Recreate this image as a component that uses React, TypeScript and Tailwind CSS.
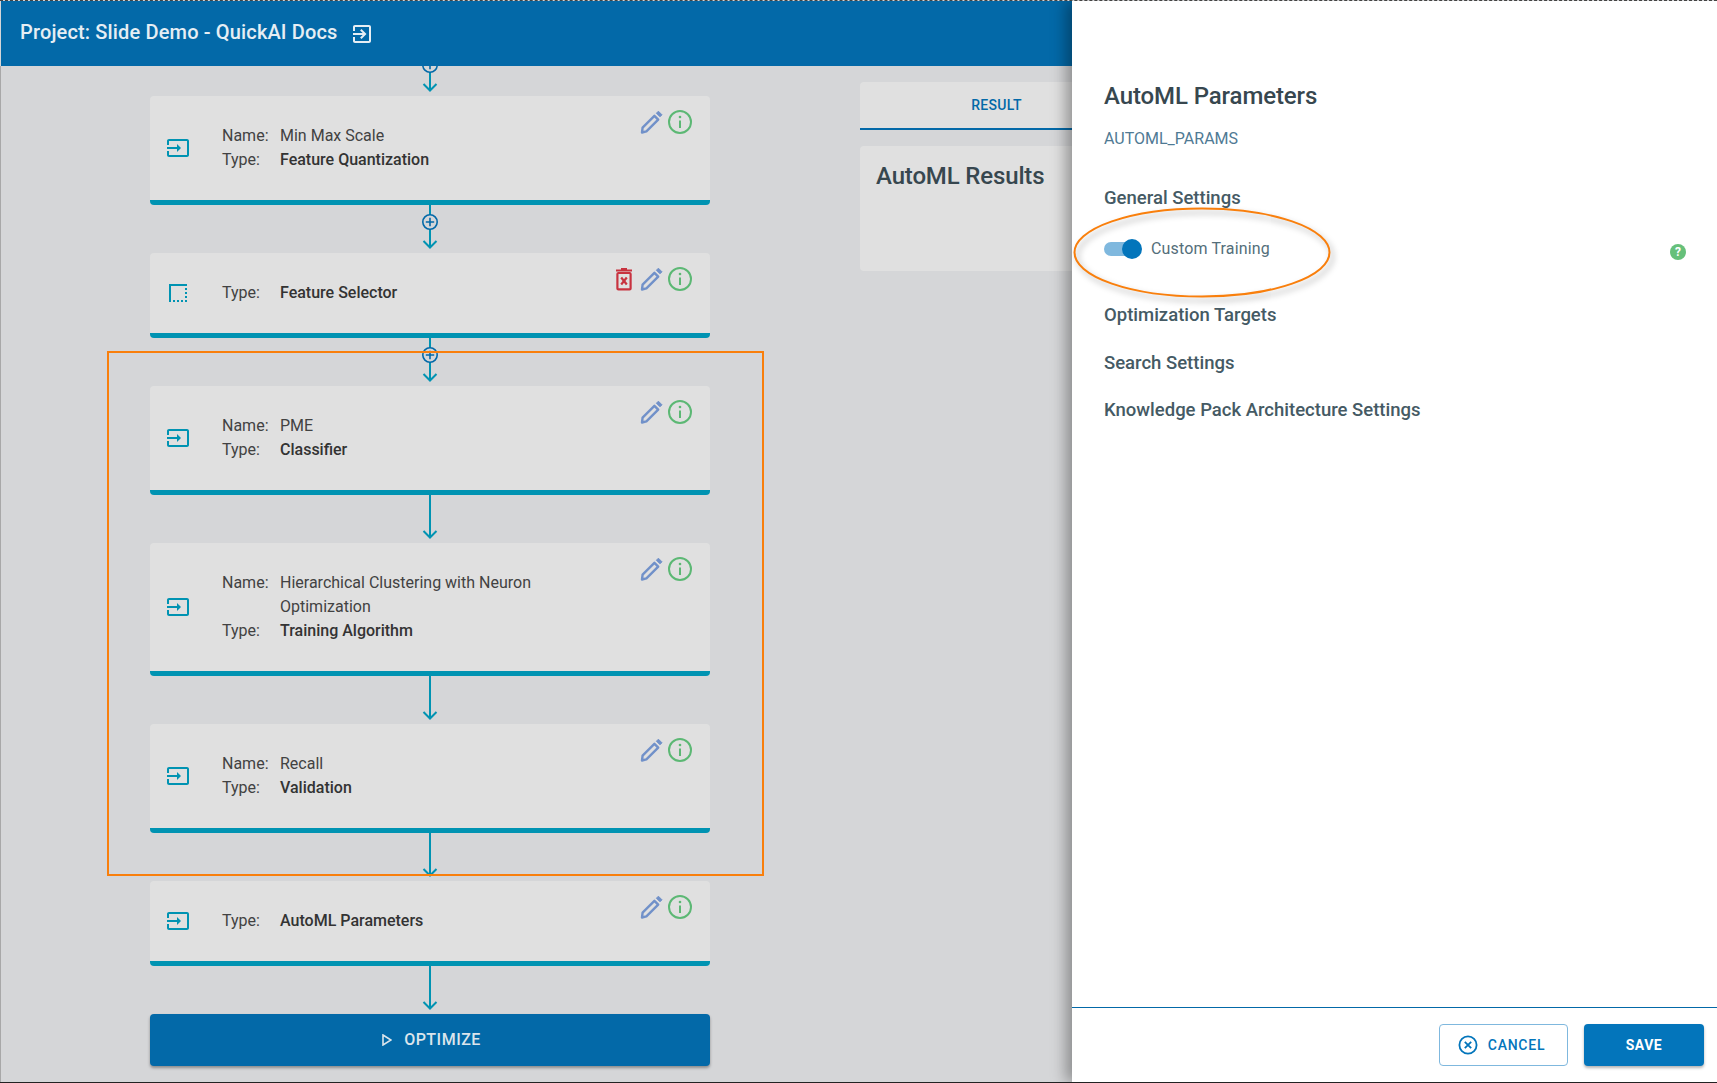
import type { ReactNode } from 'react';

const INPUT_PATH =
  'M21 3.01H3c-1.1 0-2 .9-2 2V9h2V4.99h18v14.03H3V15H1v4.01c0 1.1.9 1.98 2 1.98h18c1.1 0 2-.88 2-1.98v-14c0-1.11-.9-2-2-2zM11 16l4-4-4-4v3H1v2h10v3z';
const SELECT_PATH =
  'M15 21h2v-2h-2v2zm4 0h2v-2h-2v2zM7 21h2v-2H7v2zm4 0h2v-2h-2v2zm8-4h2v-2h-2v2zm0-4h2v-2h-2v2zM3 3v18h2V5h16V3H3zm16 6h2V7h-2v2z';

function Connector({ plus = false }: { plus?: boolean }) {
  return (
    <svg width="20" height="48" viewBox="0 0 20 48" className="block shrink-0" fill="none">
      <path d="M10 0V42" stroke="#0093b2" strokeWidth="2" />
      <path d="M3.5 36L10 42.5L16.5 36" stroke="#0093b2" strokeWidth="2" />
      {plus && (
        <g>
          <circle cx="10" cy="17" r="7.2" fill="#d5d6d8" stroke="#0369a8" strokeWidth="1.6" />
          <path d="M5.8 17H14.2M10 12.8V21.2" stroke="#0369a8" strokeWidth="1.6" />
        </g>
      )}
    </svg>
  );
}

function PencilIcon() {
  return (
    <svg width="24" height="24" viewBox="0 0 24 24" fill="none">
      <path d="M3 22.5L3.6 17.6L15.4 5.8L19.2 9.6L7.4 21.4Z" stroke="#7191c9" strokeWidth="2.4" strokeLinejoin="round" />
      <path d="M17.4 3.2L19.4 1.2L23 4.8L21 6.8Z" fill="#7191c9" stroke="#7191c9" strokeWidth="1" />
    </svg>
  );
}

function InfoIcon() {
  return (
    <svg width="24" height="24" viewBox="0 0 24 24" fill="none">
      <circle cx="12" cy="12" r="11" stroke="#5cb874" strokeWidth="2" />
      <path d="M12 10.5V18" stroke="#5cb874" strokeWidth="2" />
      <circle cx="12" cy="7" r="1.3" fill="#5cb874" />
    </svg>
  );
}

function TrashIcon() {
  return (
    <svg width="18" height="24" viewBox="0 0 18 24" fill="none" className="mr-px">
      <path d="M1 3.5H17M6 2.2H12" stroke="#c8323f" strokeWidth="2.2" />
      <rect x="2.4" y="6" width="13.2" height="16.4" rx="1" stroke="#c8323f" strokeWidth="2.2" />
      <path d="M6.2 10.5L11.8 17.5M11.8 10.5L6.2 17.5" stroke="#c8323f" strokeWidth="2.2" />
    </svg>
  );
}

interface StepCardProps {
  icon: string;
  name?: string;
  type: string;
  removable?: boolean;
}

function StepCard({ icon, name, type, removable }: StepCardProps) {
  return (
    <div className="relative w-full shrink-0 overflow-hidden rounded bg-[#e0e0e0] border-b-[5px] border-[#0093b2]">
      <div className="flex items-center gap-8 py-7 pl-4 pr-4">
        <svg width="24" height="24" viewBox="0 0 24 24" fill="#0093b2" className="shrink-0">
          <path d={icon} />
        </svg>
        <div className="text-base leading-6 text-[#424242]">
          {name && (
            <div className="flex">
              <span className="w-[58px] shrink-0">Name:</span>
              <span className="max-w-[270px]">{name}</span>
            </div>
          )}
          <div className="flex">
            <span className="w-[58px] shrink-0">Type:</span>
            <span className="font-medium text-[#333]">{type}</span>
          </div>
        </div>
      </div>
      <div className="absolute right-[18px] top-[14px] flex items-center gap-[5px]">
        {removable && <TrashIcon />}
        <PencilIcon />
        <InfoIcon />
      </div>
    </div>
  );
}

function Section({ children }: { children: ReactNode }) {
  return <h3 className="text-[18.5px] leading-6 font-medium text-[#455a64]">{children}</h3>;
}

export default function App() {
  return (
    <div className="relative h-[1083px] w-[1717px] overflow-hidden border-t border-b border-t-[#444] border-b-[#222] [border-top-style:dashed] bg-[#d5d6d8] font-['Roboto',sans-serif]">
      <header className="relative z-10 ml-px flex h-[65px] items-center gap-[12px] bg-[#0369a8] pl-[19px] text-white">
        <span className="pb-[3px] text-xl font-medium tracking-[0.15px] text-[#e6eef4]">Project: Slide Demo - QuickAI Docs</span>
        <svg width="24" height="24" viewBox="0 0 24 24" fill="#e6eef4">
          <path d="M10.09 15.59L11.5 17l5-5-5-5-1.41 1.41L12.67 11H3v2h9.67l-2.58 2.59zM19 3H5c-1.11 0-2 .9-2 2v4h2V5h14v14H5v-4H3v4c0 1.1.89 2 2 2h14c1.1 0 2-.9 2-2V5c0-1.1-.9-2-2-2z" />
        </svg>
      </header>

      <main className="flex h-[1016px] overflow-hidden border-l border-[#a8a8a8]">
        {/* Pipeline */}
        <div className="-mt-[18px] ml-[149px] flex w-[560px] shrink-0 flex-col items-center">
          <Connector plus />
          <StepCard icon={INPUT_PATH} name="Min Max Scale" type="Feature Quantization" />
          <Connector plus />
          <StepCard icon={SELECT_PATH} type="Feature Selector" removable />
          <Connector plus />
          <StepCard icon={INPUT_PATH} name="PME" type="Classifier" />
          <Connector />
          <StepCard icon={INPUT_PATH} name="Hierarchical Clustering with Neuron Optimization" type="Training Algorithm" />
          <Connector />
          <StepCard icon={INPUT_PATH} name="Recall" type="Validation" />
          <Connector />
          <StepCard icon={INPUT_PATH} type="AutoML Parameters" />
          <Connector />
          <button className="flex h-[52px] w-full shrink-0 items-center justify-center gap-[12px] rounded bg-[#0369a8] pl-[3px] text-base font-medium tracking-[0.5px] text-[#dbe5ec] shadow-[0_2px_3px_rgba(0,0,0,0.35)]">
            <svg width="10" height="12" viewBox="0 0 10 12" fill="none">
              <path d="M1 1L9 6L1 11Z" stroke="#dbe5ec" strokeWidth="1.6" />
            </svg>
            OPTIMIZE
          </button>
        </div>

        {/* Results */}
        <div className="ml-[150px] flex w-[700px] shrink-0 flex-col gap-4 pt-4">
          <div className="flex h-[48px] items-center rounded-t border-b-2 border-[#0369a8] bg-[#e0e0e0]">
            <span className="w-[273px] text-center text-sm font-medium tracking-[0.3px] text-[#0369a8]">RESULT</span>
          </div>
          <div className="h-[125px] rounded bg-[#e0e0e0] px-4 py-4">
            <h2 className="text-2xl leading-7 font-medium tracking-[-0.15px] text-[#37474f]">AutoML Results</h2>
          </div>
        </div>
      </main>

      {/* Drawer */}
      <aside className="absolute top-0 right-0 bottom-0 z-20 flex w-[645px] flex-col bg-white shadow-[-6px_0_14px_rgba(0,0,0,0.35)]">
        <div className="flex-1 pt-[81px] pr-[13px] pl-8">
          <h2 className="text-2xl leading-7 font-medium tracking-[-0.1px] text-[#37474f]">AutoML Parameters</h2>
          <p className="mt-[17px] text-base leading-6 text-[#4f7a94]">AUTOML_PARAMS</p>
          <div className="mt-[35px]">
            <Section>General Settings</Section>
          </div>
          <div className="mt-[29px] flex h-[20px] items-center">
            <div className="relative h-[20px] w-[38px] shrink-0">
              <div className="absolute top-[3px] left-0 h-[14px] w-[34px] rounded-full bg-[#7fb8de]" />
              <div className="absolute top-0 right-0 h-[20px] w-[20px] rounded-full bg-[#0375bb]" />
            </div>
            <span className="ml-[9px] text-base tracking-[0.15px] text-[#546e7a]">Custom Training</span>
            <span className="mt-[5px] mr-[18px] ml-auto flex h-4 w-4 items-center justify-center rounded-full bg-[#66c07a] text-xs font-bold text-white">?</span>
          </div>
          <div className="mt-[44px]">
            <Section>Optimization Targets</Section>
          </div>
          <div className="mt-6">
            <Section>Search Settings</Section>
          </div>
          <div className="mt-[23px]">
            <Section>Knowledge Pack Architecture Settings</Section>
          </div>
        </div>
        <footer className="flex h-[75px] shrink-0 items-start justify-end gap-4 border-t border-[#0369a8] pt-4 pr-[13px]">
          <button className="flex h-[42px] w-[129px] items-center justify-center gap-[10px] rounded border border-[#7fb8de] bg-white pr-[4px] text-sm font-medium tracking-[0.75px] text-[#0375bb]">
            <svg width="20" height="20" viewBox="0 0 20 20" fill="none">
              <circle cx="10" cy="10" r="8.6" stroke="#0375bb" strokeWidth="1.8" />
              <path d="M6.8 6.8L13.2 13.2M13.2 6.8L6.8 13.2" stroke="#0375bb" strokeWidth="1.8" />
            </svg>
            CANCEL
          </button>
          <button className="h-[42px] w-[120px] rounded bg-[#0375bb] text-sm font-bold tracking-[0.5px] text-white shadow-[0_2px_3px_rgba(0,0,0,0.3)]">
            SAVE
          </button>
        </footer>
      </aside>

      {/* Annotations drawn over the screenshot */}
      <div className="pointer-events-none absolute top-[350px] left-[107px] z-30 h-[525px] w-[657px] border-2 border-[#f97f0c]" />
      <svg
        className="pointer-events-none absolute top-[204px] left-[1070px] z-30 drop-shadow-[3px_4px_3px_rgba(0,0,0,0.35)]"
        width="264"
        height="96"
        viewBox="0 0 264 96"
        fill="none"
      >
        <ellipse cx="132" cy="47.5" rx="127.5" ry="44" stroke="#f97f0c" strokeWidth="2" />
      </svg>
    </div>
  );
}
